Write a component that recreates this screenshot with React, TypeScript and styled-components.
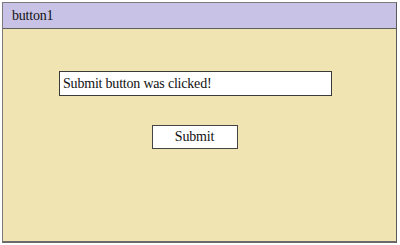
import React, {useState} from 'react';
import styled, {createGlobalStyle} from "styled-components";

const GlobalStyle = createGlobalStyle`
  html, body {
    margin: 0;
    padding: 0;
    background: #ffffff;
  }
  body {
    font-family: "Liberation Serif", "Times New Roman", serif;
  }
`;

const Frame = styled.div`
  box-sizing: border-box;
  margin: 2px 0 0 2px;
  width: 395px;
  height: 241px;
  border: 1px solid #7a7a7a;
  border-right-color: #5a5a5a;
  border-bottom: 2px solid #6a6a6a;
  background-color: #f0e4b2;
  display: flex;
  flex-direction: column;
`;

const TitleBar = styled.div`
  box-sizing: border-box;
  height: 26px;
  padding: 5px 0 0 9px;
  background-color: #c8c2e6;
  border-bottom: 1px solid #5e5e5e;
  font-size: 14px;
  letter-spacing: -0.2px;
  color: #111;
`;

const Content = styled.div`
  padding: 42px 0 0 56px;
  display: flex;
`;

const Column = styled.div`
  width: 273px;
  display: flex;
  flex-direction: column;
  align-items: center;
  gap: 29px;
`;

const Message = styled.input`
  box-sizing: border-box;
  width: 273px;
  height: 25px;
  margin: 0;
  padding: 1px 3px 0;
  border: 1px solid #3a3a3a;
  background: #ffffff;
  font-family: "Liberation Serif", "Times New Roman", serif;
  font-size: 14px;
  letter-spacing: -0.2px;
  color: #111;
  outline: none;
`;

const SubmitButton = styled.button`
  box-sizing: border-box;
  width: 86px;
  height: 24px;
  margin: 0 0 0 -2px;
  padding: 0;
  border: 1px solid #444;
  background: #ffffff;
  font-family: "Liberation Serif", "Times New Roman", serif;
  font-size: 14px;
  letter-spacing: -0.2px;
  color: #111;
  cursor: pointer;
`;

function App() {
    const [message, setMessage] = useState("Submit button was clicked!");

    return (
        <>
            <GlobalStyle/>
            <Frame>
                <TitleBar>button1</TitleBar>
                <Content>
                    <Column>
                        <Message value={message} onChange={e => setMessage(e.target.value)}/>
                        <SubmitButton onClick={() => setMessage("Submit button was clicked!")}>Submit</SubmitButton>
                    </Column>
                </Content>
            </Frame>
        </>
    );
}

export default App;
